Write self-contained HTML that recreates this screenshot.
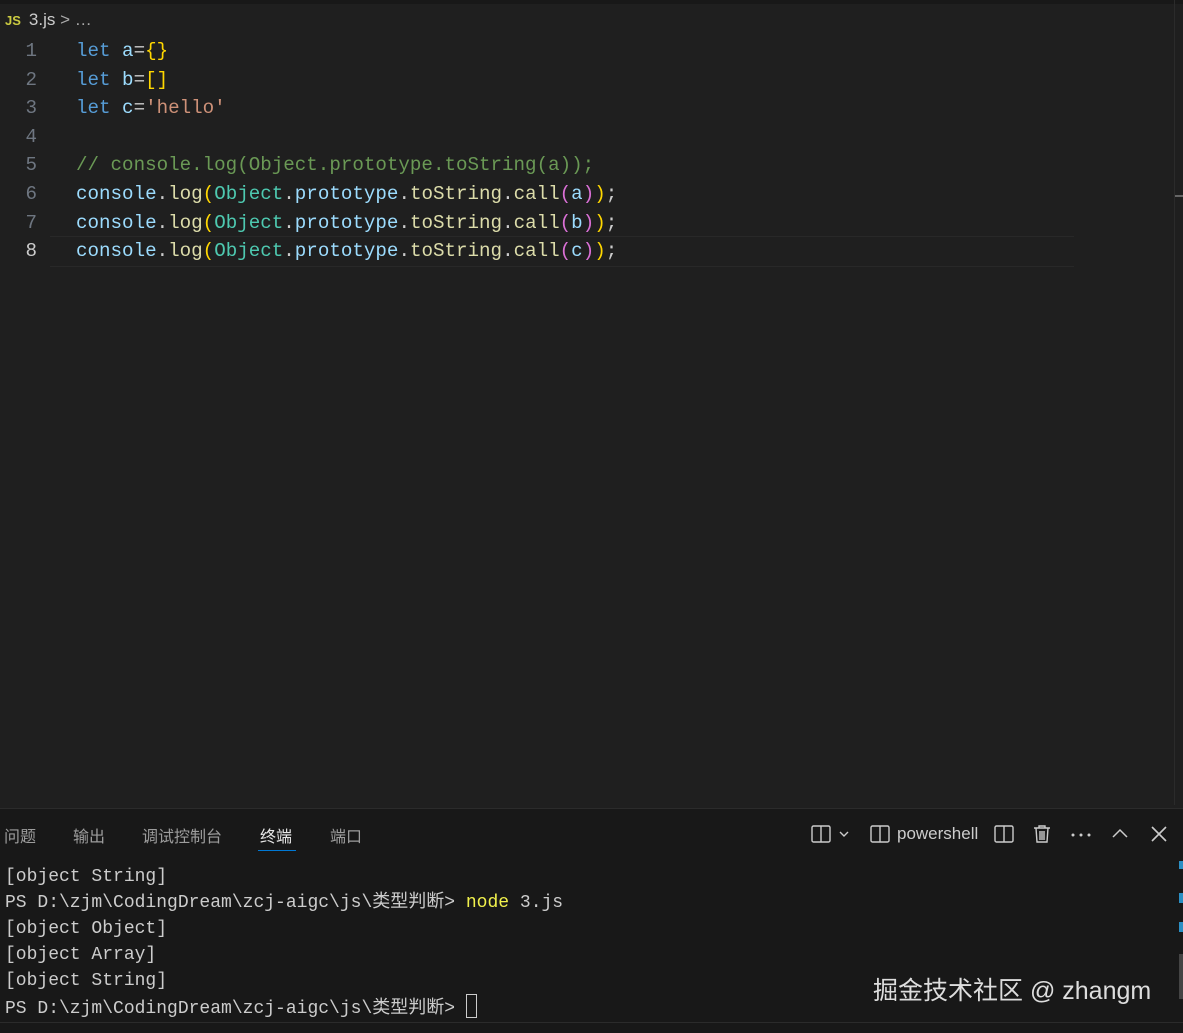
<!DOCTYPE html>
<html><head><meta charset="utf-8"><style>
body{margin:0;width:1183px;height:1032px;background:#1f1f1f;overflow:hidden;position:relative;font-family:"Liberation Sans","Noto Sans CJK SC",sans-serif}
.top{position:absolute;left:0;top:0;width:1183px;height:4px;background:#181818}
.bc{position:absolute;left:5px;top:10px;color:#ccc;font-size:17px}
.bc b{color:#cbcb41;font-size:13px;margin-right:8px}
.code{position:absolute;top:37px;left:0;font-family:"Liberation Mono",monospace;font-size:19.2px;line-height:28.6px;color:#9cdcfe;white-space:pre}
.ln{position:absolute;left:0;width:37px;text-align:right;color:#6e7681}
.tx{position:absolute;left:76px;top:0}
.k{color:#569cd6}.y{color:#ffd700}.s{color:#ce9178}.c{color:#6a9955}.f{color:#dcdcaa}.t{color:#4ec9b0}.p{color:#da70d6}.w{color:#ccc}
.cur{position:absolute;left:50px;top:236px;width:1024px;height:29px;border-top:1px solid #282828;border-bottom:1px solid #282828}
.sb{position:absolute;right:8px;top:0;width:1px;height:805px;background:#2b2b2b}
.panel{position:absolute;left:0;top:808px;width:1183px;height:214px;background:#181818;border-top:1px solid #2b2b2b}
.tabs{position:absolute;top:14px;left:4px;font-size:16px;color:#9d9d9d}
.tabs span{position:absolute;white-space:nowrap}
.term{position:absolute;top:55px;left:5px;font-family:"Liberation Mono","Noto Sans CJK SC",monospace;font-size:18px;line-height:26px;color:#ccc;white-space:pre}
.status{position:absolute;left:0;top:1022px;width:1183px;height:10px;background:#181818;border-top:1px solid #2b2b2b}
svg.i{position:absolute;top:15px}
.wm{position:absolute;left:873px;top:971px;font-size:25px;color:#ddd}
</style></head><body>
<div class="top"></div>
<div class="bc"><b>JS</b>3.js <span style="color:#aaa">&gt; …</span></div>
<div class="cur"></div>
<div class="code"><div class="ln" style="top:0">1</div><div class="ln" style="top:28.6px">2</div><div class="ln" style="top:57.2px">3</div><div class="ln" style="top:85.8px">4</div><div class="ln" style="top:114.4px">5</div><div class="ln" style="top:143px">6</div><div class="ln" style="top:171.6px">7</div><div class="ln" style="top:200.2px;color:#ccc">8</div><div class="tx"><span class="k">let</span> a<span class="w">=</span><span class="y">{}</span>
<span class="k">let</span> b<span class="w">=</span><span class="y">[]</span>
<span class="k">let</span> c<span class="w">=</span><span class="s">'hello'</span>

<span class="c">// console.log(Object.prototype.toString(a));</span>
console<span class="w">.</span><span class="f">log</span><span class="y">(</span><span class="t">Object</span><span class="w">.</span>prototype<span class="w">.</span><span class="f">toString</span><span class="w">.</span><span class="f">call</span><span class="p">(</span>a<span class="p">)</span><span class="y">)</span><span class="w">;</span>
console<span class="w">.</span><span class="f">log</span><span class="y">(</span><span class="t">Object</span><span class="w">.</span>prototype<span class="w">.</span><span class="f">toString</span><span class="w">.</span><span class="f">call</span><span class="p">(</span>b<span class="p">)</span><span class="y">)</span><span class="w">;</span>
console<span class="w">.</span><span class="f">log</span><span class="y">(</span><span class="t">Object</span><span class="w">.</span>prototype<span class="w">.</span><span class="f">toString</span><span class="w">.</span><span class="f">call</span><span class="p">(</span>c<span class="p">)</span><span class="y">)</span><span class="w">;</span></div></div>
<div class="sb"></div>
<div style="position:absolute;left:1175px;top:195px;width:8px;height:2px;background:#666"></div>
<div class="panel">
<div class="tabs"><span style="left:0">问题</span><span style="left:69px">输出</span><span style="left:138px">调试控制台</span><span style="left:256px;color:#e7e7e7">终端</span><span style="left:326px">端口</span></div>
<div style="position:absolute;left:258px;top:41px;width:38px;height:1px;background:#0078d4"></div>
<svg class="i" style="left:811px" width="42" height="20" fill="none" stroke="#ccc" stroke-width="1.4"><rect x="1" y="2" width="18" height="16" rx="1.5"/><line x1="10" y1="2" x2="10" y2="18"/><path d="M29 8l4 4 4-4"/></svg>
<svg class="i" style="left:870px" width="20" height="20" fill="none" stroke="#ccc" stroke-width="1.4"><rect x="1" y="2" width="18" height="16" rx="1.5"/><line x1="10" y1="2" x2="10" y2="18"/></svg>
<div style="position:absolute;left:897px;top:15px;font-size:17px;color:#ccc">powershell</div>
<svg class="i" style="left:994px" width="20" height="20" fill="none" stroke="#ccc" stroke-width="1.4"><rect x="1" y="2" width="18" height="16" rx="1.5"/><line x1="10" y1="2" x2="10" y2="18"/></svg>
<svg class="i" style="left:1032px" width="20" height="20" fill="none" stroke="#ccc" stroke-width="1.4"><path d="M2 4h16M7 4V2h6v2M4 4l1 14h10l1-14M8 7v9M10 7v9M12 7v9"/></svg>
<svg class="i" style="left:1070px" width="22" height="20" fill="#ccc"><circle cx="3" cy="11" r="1.5"/><circle cx="11" cy="11" r="1.5"/><circle cx="19" cy="11" r="1.5"/></svg>
<svg class="i" style="left:1111px" width="18" height="20" fill="none" stroke="#ccc" stroke-width="1.5"><path d="M2 13l7-7 7 7"/></svg>
<svg class="i" style="left:1150px" width="18" height="20" fill="none" stroke="#ccc" stroke-width="1.6"><path d="M2 3l14 14M16 3L2 17"/></svg>
<div class="term">[object String]
PS D:\zjm\CodingDream\zcj-aigc\js\类型判断&gt; <span style="color:#f1f14c">node</span> 3.js
[object Object]
[object Array]
[object String]
PS D:\zjm\CodingDream\zcj-aigc\js\类型判断&gt; <span style="display:inline-block;width:9px;height:22px;border:1px solid #ccc;vertical-align:-5px"></span></div>
<div style="position:absolute;left:1179px;top:52px;width:4px;height:8px;background:#2b8fc4"></div>
<div style="position:absolute;left:1179px;top:84px;width:4px;height:10px;background:#2b8fc4"></div>
<div style="position:absolute;left:1179px;top:113px;width:4px;height:10px;background:#2b8fc4"></div>
<div style="position:absolute;left:1179px;top:145px;width:4px;height:45px;background:#444"></div>
</div>
<div class="wm">掘金技术社区 @ zhangm</div>
<div class="status"></div>
</body></html>
